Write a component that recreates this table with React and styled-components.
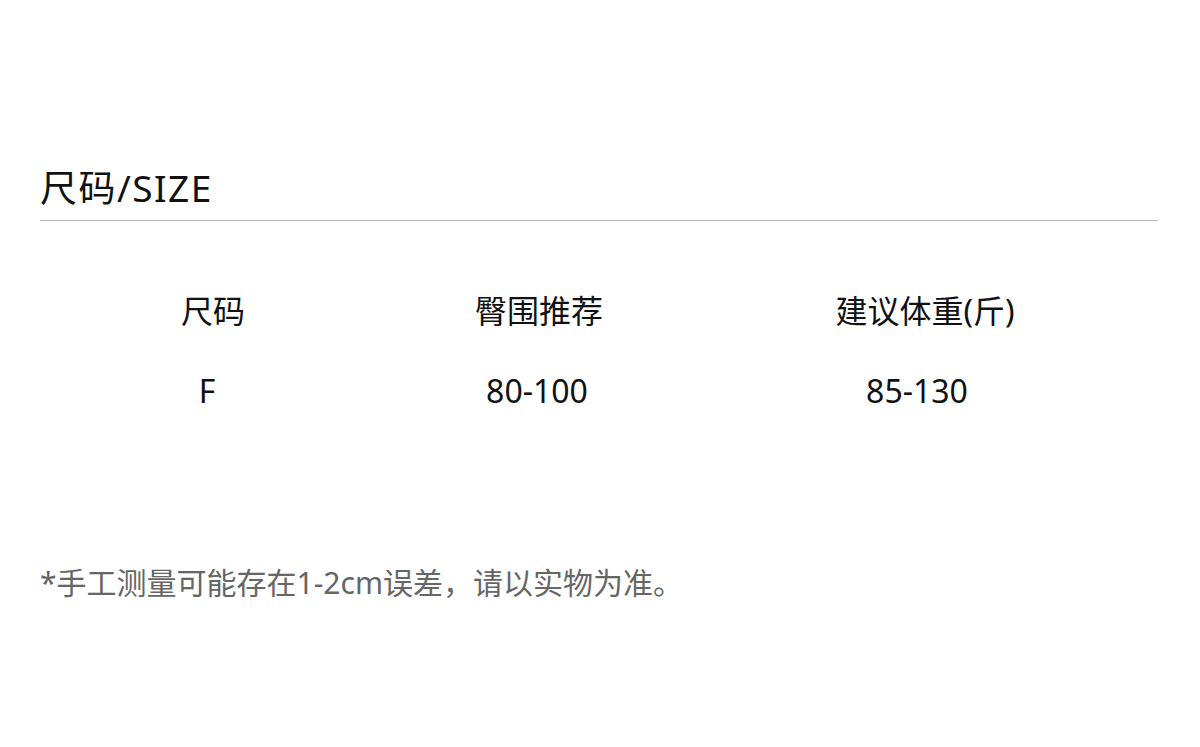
import React from 'react';
import styled, { createGlobalStyle } from 'styled-components';

const Global = createGlobalStyle`
  html, body { margin: 0; padding: 0; background: #fff; }
  body { font-family: "Noto Sans", "Noto Sans CJK SC", sans-serif; color: #111; }
`;

const Page = styled.div`
  width: 1200px;
  height: 747px;
  padding: 162px 42px 0 40px;
  box-sizing: border-box;
`;

const Title = styled.h1`
  margin: 0;
  font-size: 37px;
  font-weight: 400;
  letter-spacing: 1.5px;
  line-height: 52px;
  color: #111;
  padding-bottom: 6px;
  border-bottom: 1px solid #b9b9b9;
`;

const Table = styled.div`
  display: grid;
  grid-template-columns: 346px 306px 466px;
  grid-auto-rows: 80px;
  margin-top: 50px;
`;

const Cell = styled.div`
  text-align: center;
  font-size: 32px;
  line-height: 80px;
  color: #111;
  padding-right: ${p => p.$nudge || 0}px;
`;

const Note = styled.p`
  margin: 131px 0 0;
  font-size: 30px;
  line-height: 42px;
  color: #666;
`;

const head = ['尺码', '臀围推荐', '建议体重(斤)'];
const data = [
  ['F', 12],
  ['80-100', 4],
  ['85-130', 16],
];

export default function App() {
  return (
    <>
      <Global />
      <Page>
        <Title>尺码/SIZE</Title>
        <Table>
          {head.map(h => (
            <Cell key={h}>{h}</Cell>
          ))}
          {data.map(([v, n]) => (
            <Cell key={v} $nudge={n}>{v}</Cell>
          ))}
        </Table>
        <Note>*手工测量可能存在1-2cm误差，请以实物为准。</Note>
      </Page>
    </>
  );
}
